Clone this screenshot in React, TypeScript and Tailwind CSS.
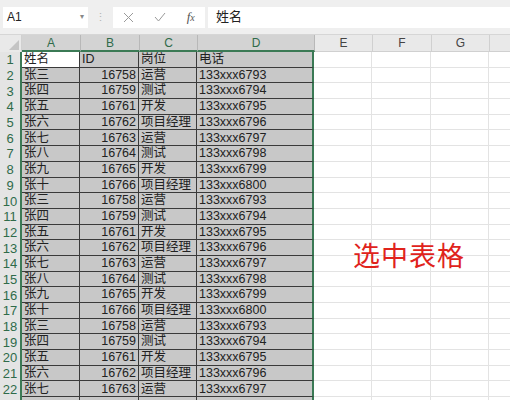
import React from 'react';

const people = [
  { name: '张三', id: 16758, role: '运营', phone: '133xxx6793' },
  { name: '张四', id: 16759, role: '测试', phone: '133xxx6794' },
  { name: '张五', id: 16761, role: '开发', phone: '133xxx6795' },
  { name: '张六', id: 16762, role: '项目经理', phone: '133xxx6796' },
  { name: '张七', id: 16763, role: '运营', phone: '133xxx6797' },
  { name: '张八', id: 16764, role: '测试', phone: '133xxx6798' },
  { name: '张九', id: 16765, role: '开发', phone: '133xxx6799' },
  { name: '张十', id: 16766, role: '项目经理', phone: '133xxx6800' },
];

const rows = Array.from({ length: 21 }, (_, i) => people[i % people.length]);

const font = { fontFamily: '"Liberation Sans", "Noto Sans CJK SC", sans-serif' };

export default function App() {
  return (
    <div className="w-[510px] h-[400px] overflow-hidden bg-white text-[#222]" style={font}>
      {/* formula bar */}
      <div className="h-[35px] bg-[#efefef] flex items-center border-b border-[#d6d6d6]">
        <div className="ml-[3px] w-[85px] h-[21px] bg-white flex items-center justify-between px-[4px] text-[12px]">
          <span>A1</span>
          <span className="text-[8px] text-[#888]">▾</span>
        </div>
        <div className="w-[25px] flex justify-center text-[#b5b5b5] text-[11px]">⋮</div>
        <div className="w-[92px] h-[21px] bg-white flex items-center justify-around">
          <svg width="11" height="11" viewBox="0 0 11 11">
            <path d="M1 1 L10 10 M10 1 L1 10" stroke="#9a9a9a" strokeWidth="1" />
          </svg>
          <svg width="12" height="10" viewBox="0 0 12 10">
            <path d="M1 5 L4.5 9 L11 1" stroke="#9a9a9a" strokeWidth="1" fill="none" />
          </svg>
          <span className="italic text-[13px] text-[#555]" style={{ fontFamily: '"Liberation Serif", serif' }}>
            f<span className="text-[10px]">x</span>
          </span>
        </div>
        <div className="ml-[3px] flex-1 h-[21px] bg-white flex items-center px-[8px] text-[13px]">姓名</div>
      </div>

      {/* column header */}
      <div className="flex h-[17px] bg-[#e9e9e9] text-[12px]">
        <div className="w-[22px] relative border-r border-[#d0d0d0]">
          <div className="absolute right-[2px] bottom-[2px] w-0 h-0 border-l-[10px] border-l-transparent border-b-[10px] border-b-[#c4c4c4]" />
        </div>
        {[
          ['A', 59],
          ['B', 59],
          ['C', 58],
          ['D', 117],
        ].map(([l, w]) => (
          <div
            key={l}
            className="bg-[#d3d3d3] text-[#2f6b4a] flex items-center justify-center border-r border-[#b8b8b8] border-b-2 border-b-[#3b7a55]"
            style={{ width: w as number }}
          >
            {l}
          </div>
        ))}
        {[
          ['E', 58],
          ['F', 59],
          ['G', 58],
        ].map(([l, w]) => (
          <div
            key={l}
            className="text-[#444] flex items-center justify-center border-r border-[#d0d0d0] border-b border-b-[#d0d0d0]"
            style={{ width: w as number }}
          >
            {l}
          </div>
        ))}
        <div className="flex-1 border-b border-[#d0d0d0]" />
      </div>

      {/* body */}
      <div className="relative">
        <Row n="1">
          <Cells a="姓名" b="ID" c="岗位" d="电话" first />
        </Row>
        {rows.map((p, i) => (
          <Row key={i} n={String(i + 2)}>
            <Cells a={p.name} b={String(p.id)} c={p.role} d={p.phone} num />
          </Row>
        ))}
        <Row n="">
          <Cells a="" b="" c="" d="" />
        </Row>
        <div
          className="absolute left-[353px] top-[183px] text-[27px] text-[#e0231c] tracking-[1px]"
          style={{ fontFamily: '"Noto Sans CJK SC", sans-serif' }}
        >
          选中表格
        </div>
      </div>
    </div>
  );
}

function Row({ n, children }: { n: string; children: React.ReactNode }) {
  return (
    <div className="flex h-[15.7px] text-[12.5px] leading-none">
      <div className="w-[22px] bg-[#e4e4e4] text-[#2f6b4a] text-[13px] flex items-center justify-center border-r-2 border-[#3b7a55]">
        {n}
      </div>
      {children}
      {[58, 59, 58].map((w, i) => (
        <div key={i} className="border-r border-b border-[#e3e3e3]" style={{ width: w }} />
      ))}
      <div className="flex-1 border-b border-[#e3e3e3]" />
    </div>
  );
}

function Cells({ a, b, c, d, first, num }: { a: string; b: string; c: string; d: string; first?: boolean; num?: boolean }) {
  const cell = 'bg-[#c8c8c8] border-r border-b border-[#3a3a3a] flex items-center px-[2px] whitespace-nowrap overflow-hidden';
  return (
    <>
      <div className={`${cell} w-[58px] ${first ? 'bg-white' : ''}`}>{a}</div>
      <div className={`${cell} w-[59px] ${num ? 'justify-end' : ''}`}>{b}</div>
      <div className={`${cell} w-[58px]`}>{c}</div>
      <div className="bg-[#c8c8c8] border-b border-[#3a3a3a] border-r-2 border-r-[#3b7a55] flex items-center px-[2px] w-[117px]">
        {d}
      </div>
    </>
  );
}
